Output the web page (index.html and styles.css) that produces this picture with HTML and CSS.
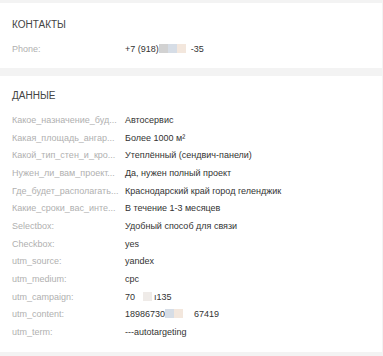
FILE: index.html
```html
<!DOCTYPE html>
<html lang="ru">
<head>
    <meta charset="UTF-8">
    <title>Заявка</title>
    <link rel="stylesheet" href="styles.css">
</head>
<body>

    <div class="card card-contacts">
        <div class="card-title">Контакты</div>
        <div class="row">
            <div class="label">Phone:</div>
            <div class="value">+7 (918)<span class="mask"><i class="m-gray"></i><i class="m-blue"></i><i class="m-beige"></i></span>-35</div>
        </div>
    </div>

    <div class="card card-data">
        <div class="card-title">Данные</div>
        <div class="row">
            <div class="label" title="Какое_назначение_будущего_ангара">Какое_назначение_буд...</div>
            <div class="value">Автосервис</div>
        </div>
        <div class="row">
            <div class="label" title="Какая_площадь_ангара_вам_нужна">Какая_площадь_ангар...</div>
            <div class="value">Более 1000 м²</div>
        </div>
        <div class="row">
            <div class="label" title="Какой_тип_стен_и_кровли">Какой_тип_стен_и_кро...</div>
            <div class="value">Утеплённый (сендвич-панели)</div>
        </div>
        <div class="row">
            <div class="label" title="Нужен_ли_вам_проект_ангара">Нужен_ли_вам_проект...</div>
            <div class="value">Да, нужен полный проект</div>
        </div>
        <div class="row">
            <div class="label" title="Где_будет_располагаться_ангар">Где_будет_располагать...</div>
            <div class="value">Краснодарский край город геленджик</div>
        </div>
        <div class="row">
            <div class="label" title="Какие_сроки_вас_интересуют">Какие_сроки_вас_инте...</div>
            <div class="value">В течение 1-3 месяцев</div>
        </div>
        <div class="row">
            <div class="label">Selectbox:</div>
            <div class="value">Удобный способ для связи</div>
        </div>
        <div class="row">
            <div class="label">Checkbox:</div>
            <div class="value">yes</div>
        </div>
        <div class="row">
            <div class="label">utm_source:</div>
            <div class="value">yandex</div>
        </div>
        <div class="row">
            <div class="label">utm_medium:</div>
            <div class="value">cpc</div>
        </div>
        <div class="row">
            <div class="label">utm_campaign:</div>
            <div class="value">70<span class="mask mask-gap"><i class="m-light"></i></span>ı135</div>
        </div>
        <div class="row">
            <div class="label">utm_content:</div>
            <div class="value">18986730<span class="mask mask-tail"><i class="m-blue"></i><i class="m-beige"></i></span>67419</div>
        </div>
        <div class="row">
            <div class="label">utm_term:</div>
            <div class="value">---autotargeting</div>
        </div>
    </div>

</body>
</html>
```

FILE: styles.css
```css
body {
    font-family: 'Liberation Sans', Arial, sans-serif;
    background-color: #f3f3f3;
    margin: 0;
    padding: 3px 1px 0 0;
}

.card {
    background-color: #fff;
    padding: 0 12px;
}

.card-contacts {
    height: 65px;
    margin-bottom: 8px;
    padding-top: 14px;
    box-sizing: border-box;
}

.card-data {
    height: 276px;
    padding-top: 12px;
    box-sizing: border-box;
}

.card-title {
    text-transform: uppercase;
    font-size: 10px;
    color: #444;
    line-height: 15px;
    margin-bottom: 9px;
}

.row {
    display: flex;
    font-size: 9px;
    line-height: 17.67px;
}

.label {
    width: 110px;
    flex: none;
    margin-right: 3px;
    color: #b0b0b0;
    white-space: nowrap;
}

.value {
    color: #333;
    white-space: nowrap;
}

.mask {
    display: inline-flex;
    vertical-align: -1px;
    margin-right: 5px;
}

.mask i {
    display: block;
    width: 9px;
    height: 9px;
}

.mask-gap {
    margin: 0 2px 0 8px;
}

.mask-tail {
    margin-right: 11px;
}

.m-gray {
    background-color: #d2d2d2;
}

.m-blue {
    background-color: #d6dde6;
}

.m-beige {
    background-color: #f3e7dd;
}

.m-light {
    background-color: #efebe8;
}
```
